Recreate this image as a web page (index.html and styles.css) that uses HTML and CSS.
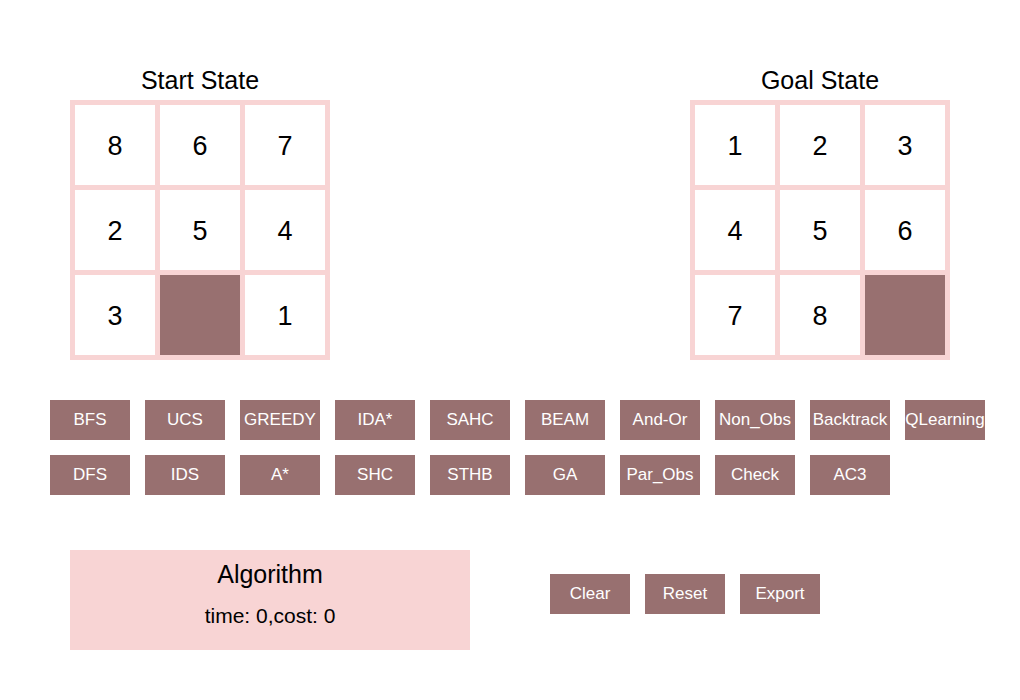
FILE: index.html
```html
<!DOCTYPE html>
<html lang="en">
<head>
<meta charset="utf-8">
<title>8 Puzzle</title>
<link rel="stylesheet" href="styles.css">
</head>
<body>
<main class="app">
  <div class="boards">
    <section class="board">
      <h2 class="title">Start State</h2>
      <div class="grid">
        <div class="tile">8</div><div class="tile">6</div><div class="tile">7</div>
        <div class="tile">2</div><div class="tile">5</div><div class="tile">4</div>
        <div class="tile">3</div><div class="tile blank"></div><div class="tile">1</div>
      </div>
    </section>
    <section class="board">
      <h2 class="title">Goal State</h2>
      <div class="grid">
        <div class="tile">1</div><div class="tile">2</div><div class="tile">3</div>
        <div class="tile">4</div><div class="tile">5</div><div class="tile">6</div>
        <div class="tile">7</div><div class="tile">8</div><div class="tile blank"></div>
      </div>
    </section>
  </div>
  <div class="algorithms">
    <div class="row">
      <button class="btn">BFS</button>
      <button class="btn">UCS</button>
      <button class="btn">GREEDY</button>
      <button class="btn">IDA*</button>
      <button class="btn">SAHC</button>
      <button class="btn">BEAM</button>
      <button class="btn">And-Or</button>
      <button class="btn">Non_Obs</button>
      <button class="btn">Backtrack</button>
      <button class="btn">QLearning</button>
    </div>
    <div class="row">
      <button class="btn">DFS</button>
      <button class="btn">IDS</button>
      <button class="btn">A*</button>
      <button class="btn">SHC</button>
      <button class="btn">STHB</button>
      <button class="btn">GA</button>
      <button class="btn">Par_Obs</button>
      <button class="btn">Check</button>
      <button class="btn">AC3</button>
    </div>
  </div>
  <div class="footer">
    <section class="result">
      <h2 class="title">Algorithm</h2>
      <p class="stats">time: 0,cost: 0</p>
    </section>
    <div class="row actions">
      <button class="btn">Clear</button>
      <button class="btn">Reset</button>
      <button class="btn">Export</button>
    </div>
  </div>
</main>
</body>
</html>
```
FILE: styles.css
```css
* {
  box-sizing: border-box;
}

body {
  margin: 0;
  background: #fff;
  color: #000;
  font-family: "Liberation Sans", Arial, sans-serif;
}

.app {
  padding: 60px 0 50px;
}

.boards {
  display: flex;
  justify-content: space-between;
  padding: 0 70px;
}

.title {
  margin: 0;
  font-size: 25px;
  font-weight: 400;
  line-height: 40px;
  text-align: center;
}

.grid {
  display: grid;
  grid-template-columns: repeat(3, 80px);
  grid-auto-rows: 80px;
  gap: 5px;
  padding: 5px;
  background: #f8d4d4;
}

.tile {
  display: flex;
  align-items: center;
  justify-content: center;
  padding-top: 2px;
  background: #fff;
  font-size: 27px;
}

.blank {
  background: #987070;
}

.algorithms {
  display: flex;
  flex-direction: column;
  gap: 15px;
  padding: 40px 0 0 50px;
}

.row {
  display: flex;
  gap: 15px;
}

.btn {
  flex: none;
  width: 80px;
  height: 40px;
  padding: 0;
  border: 0;
  background: #987070;
  color: #fff;
  font-family: inherit;
  font-size: 17px;
  white-space: nowrap;
}

.footer {
  display: flex;
  align-items: flex-start;
  gap: 80px;
  padding: 55px 70px 0;
}

.result {
  width: 400px;
  padding: 4px 0 12px;
  background: #f8d4d4;
  text-align: center;
}

.actions {
  padding-top: 24px;
}

.stats {
  margin: 0;
  font-size: 21px;
  line-height: 44px;
}
```
